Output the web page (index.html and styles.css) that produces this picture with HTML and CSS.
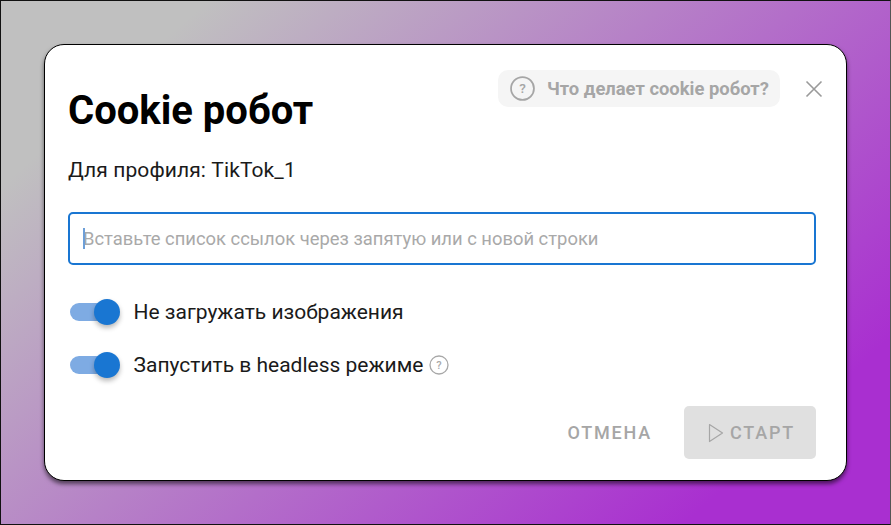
FILE: index.html
```html
<!DOCTYPE html>
<html lang="ru">
<head>
<meta charset="utf-8">
<title>Cookie робот</title>
<link rel="stylesheet" href="styles.css">
</head>
<body>
<div class="screen">
  <section class="dialog">
    <div class="top-actions">
      <div class="help-pill">
        <svg class="help-icon-lg" viewBox="0 0 24 24"><circle cx="12" cy="12" r="11" fill="none" stroke="#a6a6a6" stroke-width="1.7"/><text x="12" y="16.5" text-anchor="middle" class="q-lg">?</text></svg>
        <span>Что делает cookie робот?</span>
      </div>
      <svg class="close" viewBox="0 0 18 18"><path d="M1.5 1.5L16.5 16.5M16.5 1.5L1.5 16.5" stroke="#9a9a9a" stroke-width="1.6" fill="none"/></svg>
    </div>
    <h1 class="title">Cookie робот</h1>
    <p class="profile">Для профиля: TikTok_1</p>
    <div class="input-box"><i class="caret"></i><span class="placeholder">Вставьте список ссылок через запятую или с новой строки</span></div>
    <div class="toggle-row row-first">
      <span class="toggle"><i class="track"></i><i class="knob"></i></span>
      <span class="toggle-label">Не загружать изображения</span>
    </div>
    <div class="toggle-row row-second">
      <span class="toggle"><i class="track"></i><i class="knob"></i></span>
      <span class="toggle-label">Запустить в headless режиме</span>
      <svg class="help-icon-sm" viewBox="0 0 20 20"><circle cx="10" cy="10" r="9" fill="none" stroke="#a8a8a8" stroke-width="1.3"/><text x="10" y="14" text-anchor="middle" class="q-sm">?</text></svg>
    </div>
    <div class="footer">
      <span class="btn-cancel">ОТМЕНА</span>
      <span class="btn-start">
        <svg class="play" viewBox="0 0 16 20"><path d="M1.5 1.5L14.5 10L1.5 18.5Z" fill="none" stroke="#a6a6a6" stroke-width="1.2" stroke-linejoin="round"/></svg>
        <span>СТАРТ</span>
      </span>
    </div>
  </section>
</div>
</body>
</html>
```
FILE: styles.css
```css
* { box-sizing: border-box; }
html, body { margin: 0; height: 100%; }
body { font-family: Roboto, "Liberation Sans", sans-serif; overflow: hidden; }
.screen {
  width: 891px;
  height: 525px;
  border: 1px solid #111;
  border-right-color: #555;
  background: linear-gradient(138deg, #c0c0c0 0%, #c0c0c0 14%, #a92fd0 86%, #a92fd0 100%);
  padding: 43px 0 0 43px;
}
.dialog {
  position: relative;
  width: 803px;
  height: 437px;
  background: #fff;
  border: 1px solid #000;
  border-radius: 20px;
  box-shadow: 0 3px 4px rgba(0,0,0,.55);
  padding: 40px 30px 0 23px;
  display: flex;
  flex-direction: column;
}
.top-actions {
  position: absolute;
  top: 25px;
  right: 23px;
  display: flex;
  align-items: center;
  gap: 25px;
}
.help-pill {
  width: 282px;
  height: 37px;
  background: #f5f5f5;
  border-radius: 10px;
  display: flex;
  align-items: center;
  gap: 12px;
  padding-left: 12px;
  font-size: 18.4px;
  font-weight: 700;
  color: #a6a6a6;
  white-space: nowrap;
}
.help-icon-lg { width: 25px; height: 25px; flex: none; }
.q-lg { font: 500 13px Roboto, sans-serif; fill: #a6a6a6; }
.q-sm { font: 500 11px Roboto, sans-serif; fill: #a8a8a8; }
.close { width: 18px; height: 18px; flex: none; }
.title {
  margin: 0;
  font-size: 40px;
  line-height: 52px;
  font-weight: 700;
  color: #000;
}
.profile {
  margin: 19px 0 0;
  font-size: 21px;
  line-height: 28px;
  letter-spacing: .1px;
  color: #1a1a1a;
}
.input-box {
  margin-top: 28px;
  width: 748px;
  height: 53px;
  border: 2px solid #1976d2;
  border-radius: 5px;
  display: flex;
  align-items: center;
  padding-left: 13px;
  position: relative;
}
.caret {
  position: absolute;
  left: 13px;
  top: 14px;
  width: 2px;
  height: 21px;
  background: #6d9fd8;
}
.placeholder { font-size: 18.4px; color: #a9a9a9; white-space: nowrap; }
.toggle-row { display: flex; align-items: center; height: 28px; color: #1a1a1a; font-size: 21px; }
.row-first { margin-top: 33px; }
.row-second { margin-top: 25px; }
.toggle { position: relative; width: 50px; height: 26px; flex: none; margin-left: 2px; margin-right: 13.5px; }
.track {
  position: absolute;
  left: 0; top: 4px;
  width: 46px; height: 18px;
  border-radius: 9px;
  background: #7eabe3;
}
.knob {
  position: absolute;
  left: 24px; top: 0;
  width: 26px; height: 26px;
  border-radius: 50%;
  background: #1976d2;
  box-shadow: 0 3px 5px rgba(0,0,0,.28);
}
.help-icon-sm { width: 20px; height: 20px; margin-left: 6px; flex: none; }
.footer {
  position: absolute;
  right: 30px;
  bottom: 21px;
  display: flex;
  align-items: center;
}
.btn-cancel {
  font-size: 18px;
  font-weight: 500;
  letter-spacing: 1.8px;
  color: #a6a6a6;
  margin-right: 32px;
}
.btn-start {
  width: 132px;
  height: 53px;
  border-radius: 5px;
  background: #e0e0e0;
  display: flex;
  align-items: center;
  justify-content: center;
  gap: 6px;
  padding-left: 3px;
  font-size: 18px;
  font-weight: 500;
  letter-spacing: 1.8px;
  color: #a6a6a6;
}
.play { width: 16px; height: 20px; }
```
